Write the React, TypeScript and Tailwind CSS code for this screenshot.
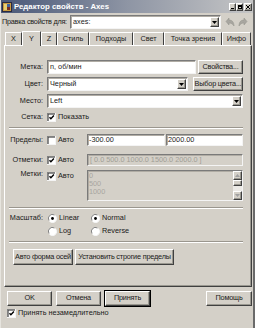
import React from "react";

const sunken =
  "border border-t-[#7a7a7a] border-l-[#7a7a7a] border-b-[#f4f4f4] border-r-[#f4f4f4] shadow-[inset_1px_1px_0_#b0aca4]";
const raised =
  "border border-t-white border-l-white border-b-[#404040] border-r-[#404040] shadow-[inset_-1px_-1px_0_#9a9890]";

function Btn({ w, label, cls = "" }: { w: string; label: string; cls?: string }) {
  return (
    <div className={`${raised} ${w} ${cls} flex items-center justify-center bg-[#d4d0c8]`}>
      <span className="whitespace-nowrap tracking-[-0.2px]">{label}</span>
    </div>
  );
}

function Arrow() {
  return (
    <div className={`${raised} w-[9px] h-full flex items-center justify-center bg-[#d4d0c8]`}>
      <svg width="5" height="3" viewBox="0 0 5 3">
        <path d="M0 0H5L2.5 3Z" fill="#000" />
      </svg>
    </div>
  );
}

function Combo({ w, text }: { w: string; text: string }) {
  return (
    <div className={`${sunken} ${w} h-[14px] bg-white flex items-stretch p-[1px]`}>
      <span className="flex-1 pl-[1px] flex items-center">{text}</span>
      <Arrow />
    </div>
  );
}

function Check({ checked }: { checked: boolean }) {
  return (
    <svg width="9" height="9" viewBox="0 0 9 9" className="shrink-0">
      <rect x="0" y="0" width="9" height="9" fill="#f4f4f4" />
      <rect x="0" y="0" width="8" height="8" fill="#808080" />
      <rect x="1" y="1" width="7" height="7" fill="#404040" />
      <rect x="1.6" y="1.6" width="6.4" height="6.4" fill="#fff" />
      {checked && <path d="M2.5 4.3L3.9 5.8L6.9 2.6" stroke="#000" strokeWidth="1.4" fill="none" />}
    </svg>
  );
}

function Radio({ checked }: { checked: boolean }) {
  return (
    <svg width="9" height="9" viewBox="0 0 9 9" className="shrink-0">
      <circle cx="4.5" cy="4.5" r="4.2" fill="#fff" />
      <path d="M1 6.5A4 4 0 0 1 6.5 1" stroke="#808080" strokeWidth="1" fill="none" />
      <path d="M8 2.5A4 4 0 0 1 2.5 8" stroke="#f4f4f4" strokeWidth="1" fill="none" />
      {checked && <circle cx="4.5" cy="4.5" r="1.4" fill="#000" />}
    </svg>
  );
}

function Label({ t }: { t: string }) {
  return <div className="w-[38px] text-right shrink-0 whitespace-nowrap">{t}</div>;
}

function Sep() {
  return <div className="ml-[4px] mr-[8px] h-[2px] border-t border-t-[#9a968e] border-b border-b-white" />;
}

function Tab({ w, label, sel = false }: { w: string; label: string; sel?: boolean }) {
  return (
    <div
      className={`${w} flex items-center justify-center whitespace-nowrap border-l border-l-white border-t border-t-white border-r border-r-[#404040] ${
        sel ? "h-[15px] relative z-10 -mb-[1px] bg-[#d4d0c8]" : "h-[13px]"
      }`}
    >
      {label}
    </div>
  );
}

export default function App() {
  return (
    <div className="w-[255px] h-[328px] overflow-hidden bg-[#d4d0c8] font-['Liberation_Sans',Arial,sans-serif] text-[7.3px] leading-none text-[#1a1a1a] flex flex-col border-l border-l-[#e6e4de] border-r-2 border-r-[#6a6a6a]">
      {/* title bar */}
      <div className="h-[13px] shrink-0 flex items-center bg-linear-to-r from-[#4a5878] via-[#8e95a4] to-[#c6c6c6] pr-[1px]">
        <svg width="10" height="10" viewBox="0 0 10 10" className="ml-[1px] shrink-0">
          <rect x="0" y="0" width="10" height="10" fill="#2a2a40" />
          <rect x="1" y="1" width="8" height="8" fill="#c89a40" />
          <rect x="2" y="2" width="3" height="6" fill="#e8d070" />
          <rect x="5" y="2" width="3" height="3" fill="#4060a0" />
          <rect x="5" y="5" width="3" height="3" fill="#7a3020" />
        </svg>
        <span className="ml-[2px] text-white font-bold text-[7.8px] whitespace-nowrap">Редактор свойств - Axes</span>
        <div className="ml-auto flex items-center">
          <div className={`${raised} w-[7px] h-[8px] bg-[#d4d0c8] flex items-end justify-center pb-[1px]`}>
            <div className="w-[3px] h-[1px] bg-black" />
          </div>
          <div className={`${raised} w-[7px] h-[8px] bg-[#d4d0c8] flex items-center justify-center`}>
            <div className="w-[4px] h-[4px] border border-black border-t-2" />
          </div>
          <div className={`${raised} ml-[1px] w-[8px] h-[8px] bg-[#d4d0c8] flex items-center justify-center`}>
            <svg width="4" height="4" viewBox="0 0 4 4">
              <path d="M0 0L4 4M4 0L0 4" stroke="#000" strokeWidth="1" />
            </svg>
          </div>
        </div>
      </div>

      {/* edit for row */}
      <div className="h-[16px] shrink-0 flex items-center mt-[1px]">
        <span className="ml-[1px] w-[68px] whitespace-nowrap tracking-[-0.25px]">Правка свойств для:</span>
        <Combo w="w-[151px]" text="axes:" />
        <div className="ml-[4px] flex gap-[1px]">
          <svg width="11" height="12" viewBox="0 0 11 12">
            <path d="M9 10C9 6 7 4 4 4V2L1 5.5L4 9V7C6 7 8 8 9 10Z" fill="#a8a6a0" stroke="#909088" strokeWidth="0.5" />
          </svg>
          <svg width="11" height="12" viewBox="0 0 11 12">
            <path d="M2 10C2 6 4 4 7 4V2L10 5.5L7 9V7C5 7 3 8 2 10Z" fill="#a8a6a0" stroke="#909088" strokeWidth="0.5" />
          </svg>
        </div>
      </div>

      {/* tabs */}
      <div className="h-[15px] shrink-0 flex items-end pl-[4px]">
        <Tab w="w-[17px]" label="X" />
        <Tab w="w-[19px]" label="Y" sel />
        <Tab w="w-[16px]" label="Z" />
        <Tab w="w-[32px]" label="Стиль" />
        <Tab w="w-[44px]" label="Подходы" />
        <Tab w="w-[31px]" label="Свет" />
        <Tab w="w-[58px]" label="Точка зрения" />
        <Tab w="w-[29px]" label="Инфо" />
      </div>

      {/* panel */}
      <div className="ml-[3px] w-[248px] h-[242px] shrink-0 flex flex-col border border-t-white border-l-white border-r-[#404040] border-b-[#404040] shadow-[inset_-1px_-1px_0_#9a9890]">
        <div className="mt-[14px] h-[14px] flex items-center">
          <Label t="Метка:" />
          <div className={`${sunken} ml-[4px] w-[149px] h-[14px] bg-white flex items-center pl-[2px]`}>n, об/мин</div>
          <Btn w="w-[45px] h-[14px]" label="Свойства..." cls="ml-[2px]" />
        </div>
        <div className="mt-[3px] h-[14px] flex items-center">
          <Label t="Цвет:" />
          <div className="ml-[4px]">
            <Combo w="w-[141px]" text="Черный" />
          </div>
          <Btn w="w-[50px] h-[14px]" label="Выбор цвета..." cls="ml-[5px]" />
        </div>
        <div className="mt-[3px] h-[14px] flex items-center">
          <Label t="Место:" />
          <div className="ml-[4px]">
            <Combo w="w-[196px]" text="Left" />
          </div>
        </div>
        <div className="mt-[4px] h-[10px] flex items-center">
          <Label t="Сетка:" />
          <div className="ml-[4px] flex items-center gap-[2px]">
            <Check checked />
            <span>Показать</span>
          </div>
        </div>
        <div className="mt-[5px]">
          <Sep />
        </div>
        <div className="mt-[5px] h-[12px] flex items-center">
          <Label t="Пределы:" />
          <div className="ml-[4px] w-[40px] flex items-center gap-[2px]">
            <Check checked={false} />
            <span>Авто</span>
          </div>
          <div className={`${sunken} w-[78px] h-[12px] bg-white flex items-center pl-[1px]`}>-300.00</div>
          <div className={`${sunken} ml-[1px] w-[77px] h-[12px] bg-white flex items-center pl-[1px]`}>2000.00</div>
        </div>
        <div className="mt-[8px] h-[12px] flex items-center">
          <Label t="Отметки:" />
          <div className="ml-[4px] w-[40px] flex items-center gap-[2px]">
            <Check checked />
            <span>Авто</span>
          </div>
          <div className={`${sunken} w-[156px] h-[12px] bg-[#d4d0c8] flex items-center pl-[2px] text-[#a09e96] whitespace-nowrap`}>
            [ 0.0 500.0 1000.0 1500.0 2000.0 ]
          </div>
        </div>
        <div className="mt-[4px] h-[31px] flex items-start">
          <Label t="Метки:" />
          <div className="ml-[4px] w-[40px] flex items-center gap-[2px] h-[10px] mt-[1px]">
            <Check checked />
            <span>Авто</span>
          </div>
          <div className={`${sunken} w-[156px] h-[31px] bg-[#d4d0c8] flex text-[#a8a6a0] overflow-hidden`}>
            <div className="flex-1 flex flex-col pl-[1px] pt-[1px] leading-[8px]">
              <span>0</span>
              <span>500</span>
              <span>1000</span>
            </div>
            <div className="w-[9px] flex flex-col">
              <div className={`${raised} h-[9px] flex items-center justify-center`}>
                <svg width="5" height="3" viewBox="0 0 5 3">
                  <path d="M0 3H5L2.5 0Z" fill="#a0a0a0" />
                </svg>
              </div>
              <div className={`${raised} h-[6px]`} />
              <div className="flex-1 bg-[#eceae6]" />
              <div className={`${raised} h-[9px] flex items-center justify-center`}>
                <svg width="5" height="3" viewBox="0 0 5 3">
                  <path d="M0 0H5L2.5 3Z" fill="#a0a0a0" />
                </svg>
              </div>
            </div>
          </div>
        </div>
        <div className="mt-[6px]">
          <Sep />
        </div>
        <div className="mt-[4px] h-[10px] flex items-center">
          <Label t="Масштаб:" />
          <div className="ml-[5px] w-[43px] flex items-center gap-[2px]">
            <Radio checked />
            <span>Linear</span>
          </div>
          <div className="flex items-center gap-[2px]">
            <Radio checked />
            <span>Normal</span>
          </div>
        </div>
        <div className="mt-[3px] h-[10px] flex items-center">
          <div className="w-[38px]" />
          <div className="ml-[5px] w-[43px] flex items-center gap-[2px]">
            <Radio checked={false} />
            <span>Log</span>
          </div>
          <div className="flex items-center gap-[2px]">
            <Radio checked={false} />
            <span>Reverse</span>
          </div>
        </div>
        <div className="mt-[5px]">
          <Sep />
        </div>
        <div className="mt-[6px] h-[16px] flex items-center pl-[8px] gap-[2px]">
          <Btn w="w-[60px] h-[16px]" label="Авто форма осей" />
          <Btn w="w-[99px] h-[16px]" label="Установить строгие пределы" />
        </div>
      </div>

      {/* bottom buttons */}
      <div className="mt-[3px] h-[16px] shrink-0 flex items-center pl-[6px]">
        <Btn w="w-[45px] h-[15px]" label="OK" />
        <Btn w="w-[45px] h-[15px]" label="Отмена" cls="ml-[4px]" />
        <div className="ml-[3px] border border-black">
          <Btn w="w-[45px] h-[15px]" label="Принять" />
        </div>
        <Btn w="w-[46px] h-[15px]" label="Помощь" cls="ml-auto mr-[1px]" />
      </div>
      <div className="mt-[2px] h-[10px] shrink-0 flex items-center pl-[6px] gap-[2px]">
        <Check checked />
        <span>Принять незамедлительно</span>
      </div>
    </div>
  );
}
